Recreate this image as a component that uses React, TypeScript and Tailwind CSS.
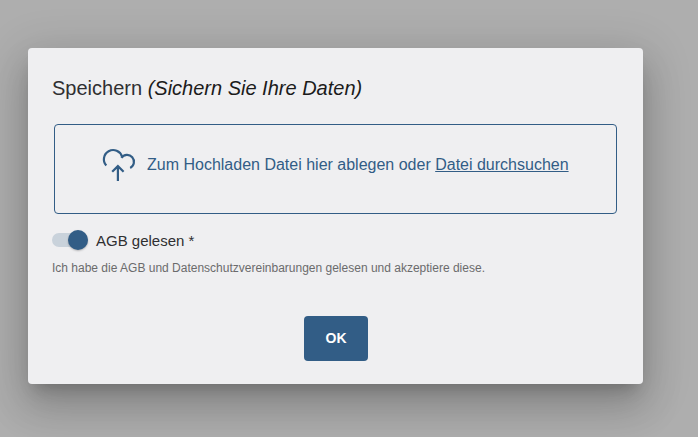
function CloudUploadIcon() {
  return (
    <svg className="size-8 shrink-0 overflow-visible" viewBox="0 0 32 32" fill="none" stroke="currentColor" strokeWidth="2.2">
      <path d="M3.3 16.6A9.3 9.3 0 1 1 19.1 7.7" />
      <path d="M18.4 8.9A6.9 6.9 0 1 1 27.2 19" />
      <path d="M14.9 32V17.5M9.2 22.8L14.9 17.1L20.6 22.8" />
    </svg>
  );
}

function Toggle() {
  return (
    <span role="switch" aria-checked="true" className="flex h-3.5 w-9 items-center justify-end rounded-full bg-[#c9d2db]">
      <span className="size-5 rounded-full bg-[#325d86] shadow-[0_1px_2px_rgba(0,0,0,0.25)]" />
    </span>
  );
}

export default function App() {
  return (
    <div className="h-[437px] w-[698px] overflow-hidden bg-[#aeaeae] pt-12 pl-7 font-['Liberation_Sans',Arial,sans-serif]">
      <div className="flex h-[336px] w-[615px] flex-col rounded bg-[#efeff1] px-6 pt-6 shadow-[0_11px_15px_-7px_rgba(0,0,0,0.2),0_24px_38px_3px_rgba(0,0,0,0.14),0_9px_46px_8px_rgba(0,0,0,0.12)]">
        <h1 className="h-8 text-xl leading-8 whitespace-nowrap text-[#2f2f31]">
          Speichern <em className="text-[#1b1b1b]">(Sichern Sie Ihre Daten)</em>
        </h1>
        <div className="mt-5 ml-0.5 flex h-[90px] w-[563px] items-start rounded border border-[#325d86] pt-6 pl-12 text-[#325d86]">
          <CloudUploadIcon />
          <p className="ml-3 text-base leading-8 whitespace-nowrap">
            Zum Hochladen Datei hier ablegen oder <a className="underline">Datei durchsuchen</a>
          </p>
        </div>
        <label className="mt-4 flex h-5 items-center gap-2 text-[15px] leading-5 text-[#2f2f31]">
          <Toggle />
          <span className="pt-0.5">AGB gelesen *</span>
        </label>
        <p className="mt-[9px] text-xs leading-[18px] whitespace-nowrap text-[#6b6b6c]">
          Ich habe die AGB und Datenschutzvereinbarungen gelesen und akzeptiere diese.
        </p>
        <button className="mt-[39px] ml-[252px] h-[45px] w-16 rounded bg-[#325d86] pb-0.5 text-sm font-bold text-white">OK</button>
      </div>
    </div>
  );
}
